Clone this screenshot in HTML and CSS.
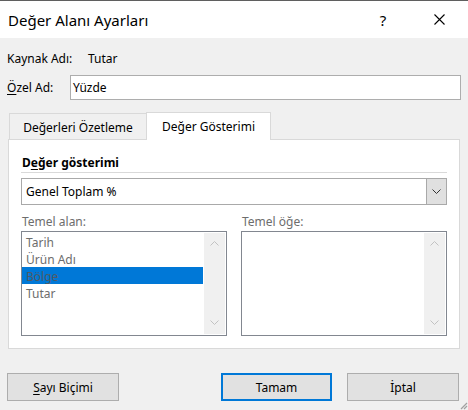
FILE: index.html
```html
<!DOCTYPE html>
<html lang="tr">
<head>
    <meta charset="UTF-8">
    <title>Değer Alanı Ayarları</title>
    <link rel="stylesheet" href="styles.css">
</head>
<body>

<div class="titlebar">
    <span class="title">Değer Alanı Ayarları</span>
    <span class="help">?</span>
    <span class="close">
        <svg width="11" height="11" viewBox="0 0 11 11"><path d="M0.5 0.5 L10.5 10.5 M10.5 0.5 L0.5 10.5" stroke="#000" stroke-width="1.1" fill="none"/></svg>
    </span>
</div>

<div class="content">
    <div class="row source">
        <span class="label">Kaynak Adı:</span>
        <span>Tutar</span>
    </div>

    <div class="row custom">
        <span class="label short"><u>Ö</u>zel Ad:</span>
        <div class="textbox">Yüzde</div>
    </div>

    <div class="tabs">
        <div class="tab">Değerleri Özetleme</div>
        <div class="tab active">Değer Gösterimi</div>
    </div>

    <div class="panel">
        <div class="heading">D<u>e</u>ğer gösterimi</div>

        <div class="select">
            <span class="select-text">Genel Toplam %</span>
            <span class="select-btn">
                <svg width="9" height="5" viewBox="0 0 9 5"><path d="M0.5 0.5 L4.5 4.5 L8.5 0.5" stroke="#333" stroke-width="1" fill="none"/></svg>
            </span>
        </div>

        <div class="lists">
            <div class="list-col">
                <div class="list-label">Temel alan:</div>
                <div class="listbox">
                    <ul class="items">
                        <li>Tarih</li>
                        <li>Ürün Adı</li>
                        <li class="selected">Bölge</li>
                        <li>Tutar</li>
                    </ul>
                    <div class="scrollbar">
                        <svg width="9" height="5" viewBox="0 0 9 5"><path d="M0.5 4.5 L4.5 0.5 L8.5 4.5" stroke="#c2c2c2" stroke-width="1" fill="none"/></svg>
                        <svg width="9" height="5" viewBox="0 0 9 5"><path d="M0.5 0.5 L4.5 4.5 L8.5 0.5" stroke="#c2c2c2" stroke-width="1" fill="none"/></svg>
                    </div>
                </div>
            </div>
            <div class="list-col">
                <div class="list-label">Temel öğe:</div>
                <div class="listbox">
                    <ul class="items"></ul>
                    <div class="scrollbar">
                        <svg width="9" height="5" viewBox="0 0 9 5"><path d="M0.5 4.5 L4.5 0.5 L8.5 4.5" stroke="#c2c2c2" stroke-width="1" fill="none"/></svg>
                        <svg width="9" height="5" viewBox="0 0 9 5"><path d="M0.5 0.5 L4.5 4.5 L8.5 0.5" stroke="#c2c2c2" stroke-width="1" fill="none"/></svg>
                    </div>
                </div>
            </div>
        </div>
    </div>

    <div class="buttons">
        <div class="button"><u>S</u>ayı Biçimi</div>
        <div class="button default">Tamam</div>
        <div class="button">İptal</div>
    </div>
</div>

<svg class="grip" width="8" height="8" viewBox="0 0 8 8">
    <path d="M7 1 L1 7 M7 4 L4 7" stroke="#a0a0a0" stroke-width="1.2" fill="none"/>
</svg>

</body>
</html>
```

FILE: styles.css
```css
* {
  box-sizing: border-box;
}

body {
  margin: 0;
  width: 468px;
  height: 410px;
  overflow: hidden;
  position: relative;
  font-family: "Noto Sans", "Segoe UI", sans-serif;
  font-size: 12px;
  color: #000;
  background: #f0f0f0;
}

u {
  text-decoration-thickness: 1px;
  text-underline-offset: 2px;
}

/* Title bar */
.titlebar {
  height: 38px;
  border-top: 1px solid #5f5f5f;
  background: #fff;
  display: flex;
  align-items: center;
  padding-left: 8px;
}

.title {
  flex: 1;
  font-size: 15px;
}

.help {
  width: 30px;
  text-align: center;
  font-size: 15px;
}

.close {
  width: 30px;
  margin-left: 26px;
  margin-right: 14px;
  display: flex;
  justify-content: center;
}

/* Body */
.content {
  padding: 0 7px;
}

.row {
  display: flex;
  align-items: center;
}

.source {
  height: 20px;
  margin-top: 10px;
}

.custom {
  margin-top: 7px;
}

.label {
  width: 81px;
}

.label.short {
  width: 63px;
}

.textbox {
  flex: 1;
  height: 25px;
  line-height: 23px;
  padding-left: 2px;
  background: #fff;
  border: 1px solid #adadad;
}

/* Tabs */
.tabs {
  display: flex;
  align-items: flex-end;
  margin: 12px 0 -1px 2px;
  position: relative;
  z-index: 1;
}

.tab {
  width: 137px;
  height: 26px;
  margin-bottom: 1px;
  border: 1px solid #d9d9d9;
  border-bottom: none;
  border-right: none;
  text-align: center;
  line-height: 27px;
}

.tab.active {
  width: 125px;
  height: 28px;
  margin-bottom: 0;
  background: #fff;
  border-right: 1px solid #d9d9d9;
  line-height: 28px;
}

.panel {
  margin: 0 1px;
  height: 210px;
  background: #fff;
  border: 1px solid #d9d9d9;
  padding: 14px 12px 0 12px;
}

.heading {
  font-weight: bold;
  height: 19px;
  line-height: 18px;
  padding-left: 1px;
  border-bottom: 1px solid #d9d9d9;
}

.select {
  display: flex;
  height: 27px;
  margin-top: 5px;
  border: 1px solid #a9a9a9;
}

.select-text {
  flex: 1;
  padding-left: 4px;
  line-height: 26px;
}

.select-btn {
  width: 20px;
  background: #e0e0e0;
  border-left: 1px solid #a9a9a9;
  display: flex;
  align-items: center;
  justify-content: center;
}

.lists {
  display: flex;
  gap: 14px;
  margin-top: 8px;
}

.list-col {
  flex: 1;
}

.list-label {
  height: 16px;
  line-height: 18px;
  padding-left: 1px;
  color: #6d6d6d;
}

.listbox {
  display: flex;
  height: 105px;
  margin-top: 2px;
  border: 1px solid #828790;
}

.items {
  flex: 1;
  list-style: none;
  margin: 0;
  padding: 1px 0 0 0;
  color: #6d6d6d;
}

.items li {
  height: 17px;
  line-height: 19px;
  overflow: hidden;
  padding-left: 4px;
}

.items li.selected {
  background: #0078d7;
  color: #4f5a66;
}

.scrollbar {
  width: 21px;
  margin: 1px;
  background: #f0f0f0;
  display: flex;
  flex-direction: column;
  justify-content: space-between;
  align-items: center;
  padding: 8px 0 9px;
}

/* Buttons */
.buttons {
  display: flex;
  gap: 15px;
  margin: 24px 2px 0 0;
}

.button {
  width: 112px;
  height: 28px;
  line-height: 27px;
  text-align: center;
  background: #e1e1e1;
  border: 1px solid #adadad;
}

.button.default {
  width: 111px;
  margin-left: auto;
  line-height: 25px;
  border: 2px solid #0078d7;
}

.grip {
  position: absolute;
  right: 0;
  bottom: 0;
}
```
